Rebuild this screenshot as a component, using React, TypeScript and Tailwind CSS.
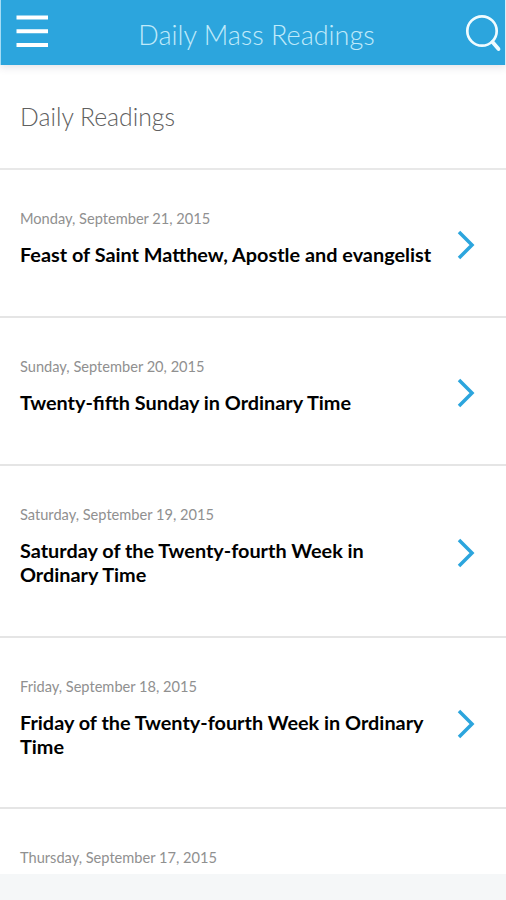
const readings = [
  { date: "Monday, September 21, 2015", title: ["Feast of Saint Matthew, Apostle and evangelist"], height: "h-[148px]" },
  { date: "Sunday, September 20, 2015", title: ["Twenty-fifth Sunday in Ordinary Time"], height: "h-[148px]" },
  { date: "Saturday, September 19, 2015", title: ["Saturday of the Twenty-fourth Week in", "Ordinary Time"], height: "h-[172px]" },
  { date: "Friday, September 18, 2015", title: ["Friday of the Twenty-fourth Week in Ordinary", "Time"], height: "h-[171px]" },
];

export default function App() {
  return (
    <div className="flex h-[900px] w-[506px] flex-col overflow-hidden bg-[#f5f7f8] font-['Lato',sans-serif]">
      <header className="z-10 flex h-[65px] shrink-0 items-start justify-between border-x border-l-[#a5dcf5] border-r-[#d5eefa] bg-[#2ca5dd] shadow-[0_2px_8px_rgba(60,50,80,0.15)]">
        <svg className="ml-[15px] mt-[14px] h-[34px] w-[33px]" viewBox="0 0 33 34" stroke="white" strokeWidth="4" strokeLinecap="butt">
          <path d="M.5 3.500h31.500M.5 17.300h31.500M.5 31h31.500" />
        </svg>
        <h1 className="mt-[17px] whitespace-nowrap text-[27px] font-light leading-9 text-[#c0eafa]">Daily Mass Readings</h1>
        <svg className="mt-[13px] h-[40px] w-[41px]" viewBox="0 0 41 40" fill="none" stroke="#f0fcff" strokeWidth="2.700">
          <circle cx="18" cy="18" r="14.700" />
          <path d="M28.500 29l6 7" strokeWidth="3.800" strokeLinecap="round" />
        </svg>
      </header>
      <main className="h-[809px] shrink-0 overflow-hidden bg-white">
        <div className="flex h-[105px] items-center border-b-2 border-[#e8e8e8] px-5 pt-px">
          <h2 className="text-[24.750px] font-light text-[#606060]">Daily Readings</h2>
        </div>
        {readings.map((r) => (
          <article key={r.date} className={`flex items-start border-b-2 border-[#e5e5e5] pl-5 pr-[30px] ${r.height}`}>
            <div className="flex-1 whitespace-nowrap pt-[39px]">
              <p className="text-[14.620px] leading-5 text-[#909090]">{r.date}</p>
              <h3 className="mt-[13px] text-[19.850px] font-bold leading-6 text-black">
                {r.title.map((t) => <span className="block" key={t}>{t}</span>)}
              </h3>
            </div>
            <svg className="mt-[3px] h-[30px] w-[20px] self-center" viewBox="0 0 20 30" fill="none" stroke="#2ca5dd" strokeWidth="3.500"><path d="M3 2l13 13L3 28" /></svg>
          </article>
        ))}
        <p className="px-5 pt-[39px] text-[14.620px] leading-5 text-[#909090]">Thursday, September 17, 2015</p>
      </main>
    </div>
  );
}
